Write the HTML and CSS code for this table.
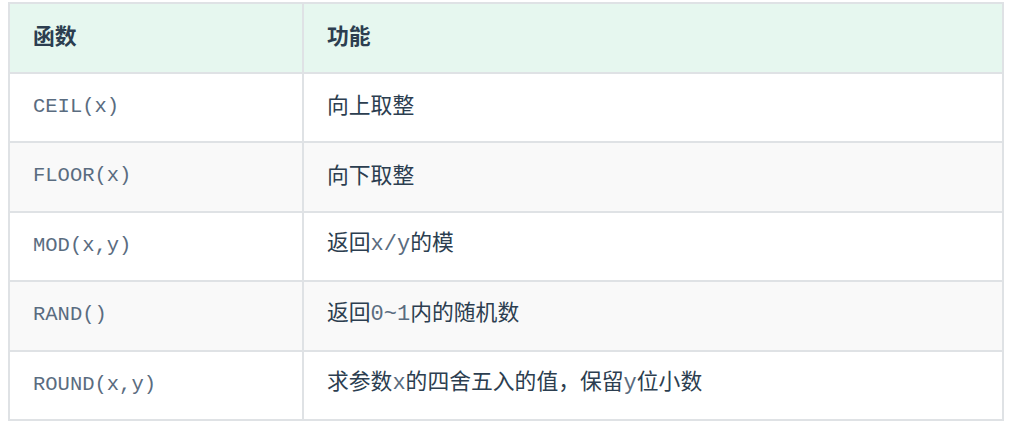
FILE: index.html
```html
<!DOCTYPE html>
<html lang="zh-CN">
<head>
<meta charset="utf-8">
<title>数值函数</title>
<link rel="stylesheet" href="styles.css">
</head>
<body>
<table class="fn-table">
  <thead>
    <tr><th class="col-fn">函数</th><th>功能</th></tr>
  </thead>
  <tbody>
    <tr><td><code>CEIL(x)</code></td><td>向上取整</td></tr>
    <tr><td><code>FLOOR(x)</code></td><td>向下取整</td></tr>
    <tr><td><code>MOD(x,y)</code></td><td>返回<code>x/y</code>的模</td></tr>
    <tr><td><code>RAND()</code></td><td>返回<code>0~1</code>内的随机数</td></tr>
    <tr><td><code>ROUND(x,y)</code></td><td>求参数<code>x</code>的四舍五入的值，保留<code>y</code>位小数</td></tr>
  </tbody>
</table>
</body>
</html>
```
FILE: styles.css
```css
html, body {
  background: #ffffff;
}
body {
  margin: 2px 7px 0 8px;
  font-family: "Noto Sans CJK SC", "Noto Sans", sans-serif;
  color: #2c3e50;
}
.fn-table {
  width: 100%;
  border-collapse: collapse;
  font-size: 21.8px;
}
.fn-table th,
.fn-table td {
  border: 2px solid #dfe2e5;
  padding: 0 23px 6px;
  height: 61.5px;
  text-align: left;
  vertical-align: middle;
  line-height: 1;
}
.fn-table th {
  background: #e6f7ef;
  font-weight: 700;
}
.fn-table .col-fn {
  width: 246px;
}
.fn-table tbody tr:nth-child(even) {
  background: #f9f9f9;
}
.fn-table code {
  font-family: "Liberation Mono", monospace;
  font-size: 20.5px;
  color: #5a6c80;
}
.fn-table td + td code {
  font-size: 22px;
}
```
